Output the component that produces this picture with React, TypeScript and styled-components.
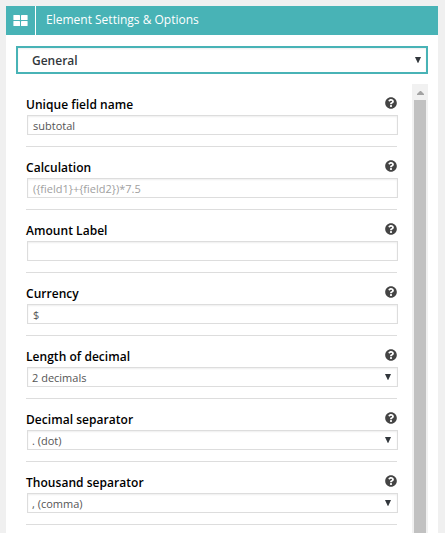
import React from 'react';
import styled, { createGlobalStyle, css } from 'styled-components';
import { FaQuestionCircle } from 'react-icons/fa';

const GlobalStyle = createGlobalStyle`
  * { box-sizing: border-box; }
  html, body { margin: 0; height: 533px; overflow: hidden; }
  body { background: #f0f0f0; font-family: 'Open Sans', sans-serif; }
`;

const Panel = styled.main`
  width: 432px;
  height: 527px;
  margin: 6px 0 0 6px;
  background: #fff;
  overflow: hidden;
`;

const Header = styled.header`
  display: flex;
  height: 29px;
  background: #48b3b6;
  color: #fff;
`;

const HeaderIcon = styled.div`
  display: flex;
  align-items: flex-start;
  width: 30px;
  padding: 9px 0 0 7px;
  border-right: 1px solid #fff;
`;

const Title = styled.h1`
  margin: 0;
  padding-left: 10px;
  font-size: 12px;
  font-weight: 400;
  line-height: 28px;
`;

const SectionSelect = styled.div`
  display: flex;
  align-items: center;
  justify-content: space-between;
  height: 28px;
  margin: 11px 10px 10px;
  padding: 0 5px 0 14px;
  border: 2px solid #48b3b6;
  box-shadow: inset 0 1px 2px rgba(0, 0, 0, 0.07);
  color: #32373c;
  font-size: 12px;
  font-weight: 600;
  line-height: 18px;

  span { padding-top: 1px; }
`;

const Body = styled.div`
  display: flex;
  justify-content: space-between;
  height: 449px;
  padding: 0 10px 0 20px;
`;

const Fields = styled.div`
  width: 372px;
`;

const Field = styled.section`
  height: 63px;
`;

const FieldHead = styled.div`
  display: flex;
  justify-content: space-between;
  width: 371px;
  height: 31px;
  padding-top: 11px;
  color: #000;
  font-size: 12px;
  font-weight: 600;
  letter-spacing: 0.04px;
  line-height: 20px;

  svg { margin-top: 2px; color: #444; }
`;

const Control = styled.div<{ $kind: 'text' | 'placeholder' | 'select' }>`
  display: flex;
  align-items: center;
  justify-content: space-between;
  height: 20px;
  margin-left: 1px;
  padding: 0 6px 0 5px;
  border: 1px solid #ddd;
  box-shadow: inset 0 1px 2px rgba(0, 0, 0, 0.07);
  color: #555;
  font-size: 11px;
  line-height: 16px;
  ${({ $kind }) => $kind === 'placeholder' && css`color: #a0a0a0;`}
  ${({ $kind }) => $kind === 'select' && css`padding-left: 4px;`}

  span { padding-top: 2px; }
`;

const Rule = styled.hr`
  width: 371px;
  height: 1px;
  margin: 11px 0 0;
  border: 0;
  background: #ddd;
`;

const ScrollTrack = styled.div`
  display: flex;
  flex-direction: column;
  align-items: center;
  width: 16px;
  background: #f1f1f1;
`;

const ScrollButton = styled.div`
  display: flex;
  height: 16px;
  padding-top: 7px;
`;

const ScrollThumb = styled.div`
  flex: 1;
  width: 12px;
  background: #c1c1c1;
`;

const GridIcon = () => (
  <svg width="15" height="11" viewBox="0 0 15 11" fill="#fff">
    <rect x=".4" width="6.6" height="5" rx=".6" />
    <rect x="8" width="6.6" height="5" rx=".6" />
    <rect x=".4" y="6" width="6.6" height="5" rx=".6" />
    <rect x="8" y="6" width="6.6" height="5" rx=".6" />
  </svg>
);

const Caret = () => (
  <svg width="6" height="6" viewBox="0 0 6 6" fill="#32373c">
    <path d="M0 0h6L3.2 6h-.4z" />
  </svg>
);

type FieldData = { label: string; value: string; kind: 'text' | 'placeholder' | 'select' };

const fields: FieldData[] = [
  { label: 'Unique field name', value: 'subtotal', kind: 'text' },
  { label: 'Calculation', value: '({field1}+{field2})*7.5', kind: 'placeholder' },
  { label: 'Amount Label', value: '', kind: 'text' },
  { label: 'Currency', value: '$', kind: 'text' },
  { label: 'Length of decimal', value: '2 decimals', kind: 'select' },
  { label: 'Decimal separator', value: '. (dot)', kind: 'select' },
  { label: 'Thousand separator', value: ', (comma)', kind: 'select' },
];

export default function App() {
  return (
    <>
      <GlobalStyle />
      <Panel>
        <Header>
          <HeaderIcon><GridIcon /></HeaderIcon>
          <Title>Element Settings &amp; Options</Title>
        </Header>
        <SectionSelect>
          <span>General</span>
          <Caret />
        </SectionSelect>
        <Body>
          <Fields>
            {fields.map(({ label, value, kind }) => (
              <Field key={label}>
                <FieldHead>
                  <span>{label}</span>
                  <FaQuestionCircle size={12} />
                </FieldHead>
                <Control $kind={kind}>
                  <span>{value}</span>
                  {kind === 'select' && <Caret />}
                </Control>
                <Rule />
              </Field>
            ))}
          </Fields>
          <ScrollTrack>
            <ScrollButton>
              <svg width="7" height="4" viewBox="0 0 7 4" fill="#a3a3a3">
                <path d="M3 0h1l3 3v1H0V3z" />
              </svg>
            </ScrollButton>
            <ScrollThumb />
          </ScrollTrack>
        </Body>
      </Panel>
    </>
  );
}
